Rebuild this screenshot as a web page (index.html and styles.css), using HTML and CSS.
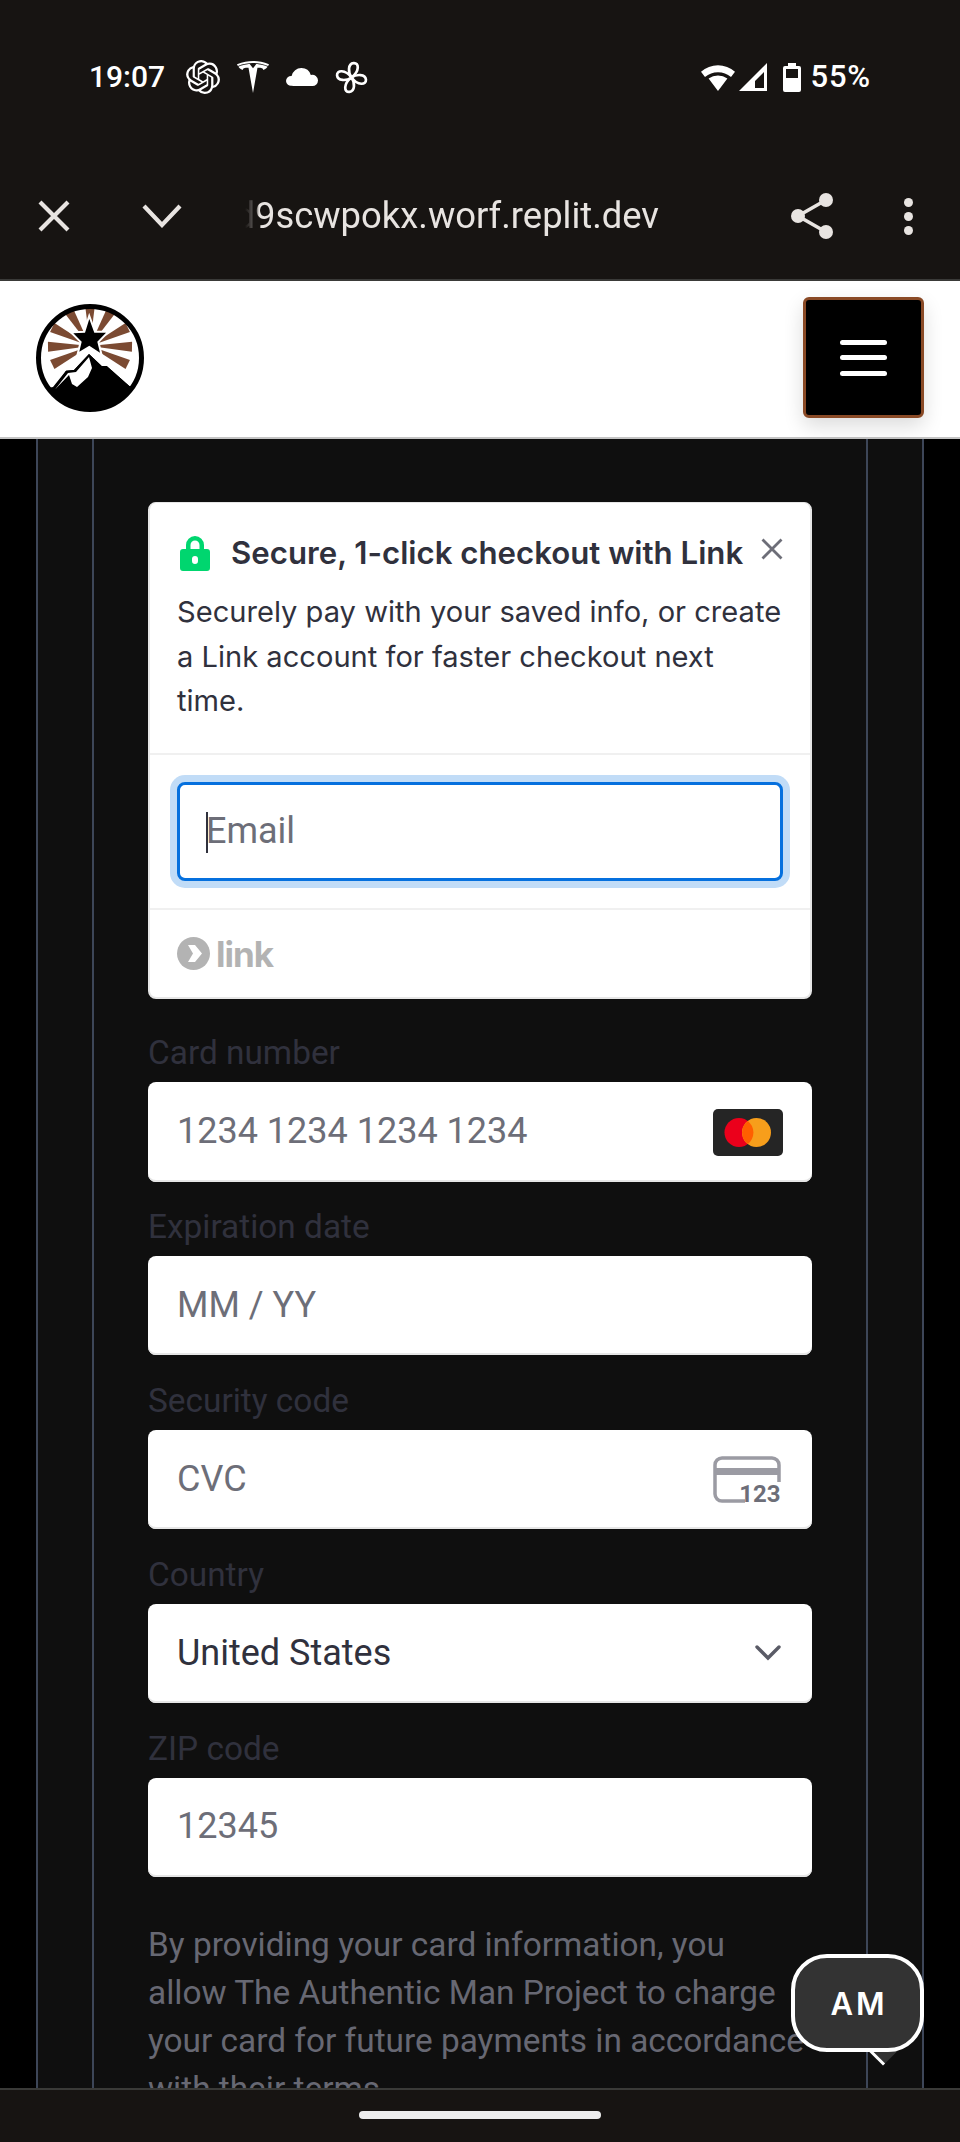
FILE: index.html
```html
<!DOCTYPE html>
<html lang="en">
<head>
<meta charset="utf-8">
<title>Checkout</title>
<link rel="stylesheet" href="styles.css">
</head>
<body>
<div class="chrome-top">
  <div class="status">
    <div class="status-left">
      <span class="time">19:07</span>
      <svg class="ic-openai" viewBox="0 0 24 24"><path fill="#fff" d="M22.2819 9.8211a5.9847 5.9847 0 0 0-.5157-4.9108 6.0462 6.0462 0 0 0-6.5098-2.9A6.0651 6.0651 0 0 0 4.9807 4.1818a5.9847 5.9847 0 0 0-3.9977 2.9 6.0462 6.0462 0 0 0 .7427 7.0966 5.98 5.98 0 0 0 .511 4.9107 6.051 6.051 0 0 0 6.5146 2.9001A5.9847 5.9847 0 0 0 13.2599 24a6.0557 6.0557 0 0 0 5.7718-4.2058 5.9894 5.9894 0 0 0 3.9977-2.9001 6.0557 6.0557 0 0 0-.7475-7.0729zm-9.022 12.6081a4.4755 4.4755 0 0 1-2.8764-1.0408l.1419-.0804 4.7783-2.7582a.7948.7948 0 0 0 .3927-.6813v-6.7369l2.02 1.1686a.071.071 0 0 1 .038.052v5.5826a4.504 4.504 0 0 1-4.4945 4.4944zm-9.6607-4.1254a4.4708 4.4708 0 0 1-.5346-3.0137l.142.0852 4.783 2.7582a.7712.7712 0 0 0 .7806 0l5.8428-3.3685v2.3324a.0804.0804 0 0 1-.0332.0615L9.74 19.9502a4.4992 4.4992 0 0 1-6.1408-1.6464zM2.3408 7.8956a4.485 4.485 0 0 1 2.3655-1.9728V11.6a.7664.7664 0 0 0 .3879.6765l5.8144 3.3543-2.0201 1.1685a.0757.0757 0 0 1-.071 0l-4.8303-2.7865A4.504 4.504 0 0 1 2.3408 7.872zm16.5963 3.8558L13.1038 8.364 15.1192 7.2a.0757.0757 0 0 1 .071 0l4.8303 2.7913a4.4944 4.4944 0 0 1-.6765 8.1042v-5.6772a.79.79 0 0 0-.407-.667zm2.0107-3.0231l-.142-.0852-4.7735-2.7818a.7759.7759 0 0 0-.7854 0L9.409 9.2297V6.8974a.0662.0662 0 0 1 .0284-.0615l4.8303-2.7866a4.4992 4.4992 0 0 1 6.6802 4.66zM8.3065 12.863l-2.02-1.1638a.0804.0804 0 0 1-.038-.0567V6.0742a4.4992 4.4992 0 0 1 7.3757-3.4537l-.142.0805L8.704 5.459a.7948.7948 0 0 0-.3927.6813zm1.0976-2.3654l2.602-1.4998 2.6069 1.4998v2.9994l-2.5974 1.4997-2.6067-1.4997Z"/></svg>
      <svg class="ic-tesla" viewBox="0 0 24 24"><path fill="#fff" d="M12 5.362l2.475-3.026s4.245.09 8.471 2.054c-1.082 1.636-3.231 2.438-3.231 2.438-.146-1.439-1.154-1.79-4.354-1.79L12 24 8.619 5.034c-3.18 0-4.188.354-4.335 1.792 0 0-2.146-.795-3.229-2.43C5.28 2.431 9.525 2.34 9.525 2.34L12 5.362l-.004.002H12v-.002zm0-3.899c3.415-.03 7.326.528 11.328 2.28.535-.968.672-1.395.672-1.395C19.625.612 15.528.015 12 0 8.472.015 4.375.61 0 2.349c0 0 .195.525.672 1.396C4.674 1.989 8.585 1.435 12 1.46v.003z"/></svg>
      <svg class="ic-cloud" viewBox="0 0 32 18"><path fill="#fff" d="M8 18a7 7 0 0 1-2-.3A5 5 0 0 1 0 13a5.2 5.2 0 0 1 5.600-5.100A10 10 0 0 1 15.500 0a9.800 9.800 0 0 1 9.300 7A5.700 5.700 0 0 1 32 12.600 5.500 5.500 0 0 1 26.500 18Z"/></svg>
      <svg class="ic-fan" viewBox="0 0 32 32"><g fill="none" stroke="#fff" stroke-width="2.600" stroke-linejoin="round"><path d="M16 16C12.500 11 12.500 2.500 18 2 23.500 1.500 24 10 16 16Z"/><path d="M16 16C12.500 11 12.500 2.500 18 2 23.500 1.500 24 10 16 16Z" transform="rotate(90 16 16)"/><path d="M16 16C12.500 11 12.500 2.500 18 2 23.500 1.500 24 10 16 16Z" transform="rotate(180 16 16)"/><path d="M16 16C12.500 11 12.500 2.500 18 2 23.500 1.500 24 10 16 16Z" transform="rotate(270 16 16)"/></g></svg>
    </div>
    <div class="status-right">
      <svg class="ic-wifi" viewBox="0 0 34 27"><path fill="#fff" d="M17 27 7.600 14.500A16 16 0 0 1 26.400 14.500ZM0 7.700A26 26 0 0 1 34 7.700L30 13A20 20 0 0 0 4 13Z"/></svg>
      <svg class="ic-signal" viewBox="0 0 28 28"><path fill="#fff" fill-rule="evenodd" d="M0 28 28 0v28ZM25 9 16 18v7h9Z"/></svg>
      <svg class="ic-battery" viewBox="0 0 18 29"><path fill="#fff" fill-rule="evenodd" d="M5 0h8v3h3a2 2 0 0 1 2 2v22a2 2 0 0 1-2 2H2a2 2 0 0 1-2-2V5a2 2 0 0 1 2-2h3ZM3 6v9h12V6Z"/></svg>
      <span class="pct">55%</span>
    </div>
  </div>
  <div class="toolbar">
    <svg class="ic-close" viewBox="0 0 32 32"><path fill="none" stroke="#e8e4e1" stroke-width="4.200" d="M2 2 30 30M30 2 2 30"/></svg>
    <svg class="ic-chevron" viewBox="0 0 40 24"><path fill="none" stroke="#e8e4e1" stroke-width="4.200" d="M2 2 20 21 38 2"/></svg>
    <div class="url"><span class="url-text">d9scwpokx.worf.replit.dev</span></div>
    <svg class="ic-share" viewBox="0 0 42 46"><g fill="#e8e4e1"><circle cx="35" cy="7" r="7"/><circle cx="7" cy="23" r="7"/><circle cx="35" cy="39" r="7"/></g><path fill="none" stroke="#e8e4e1" stroke-width="3.600" d="M35 7 7 23 35 39"/></svg>
    <div class="dots"><i></i><i></i><i></i></div>
  </div>
</div>

<header class="site-header">
  <svg class="logo" viewBox="0 0 108 108">
    <defs><clipPath id="disc"><circle cx="54" cy="54" r="52"/></clipPath></defs>
    <circle cx="54" cy="54" r="52" fill="#fff"/>
    <g clip-path="url(#disc)">
      <g fill="#7b4a32">
        <path d="M54 42 49 0H59Z"/>
        <path d="M54 42 49 0H59Z" transform="rotate(31 54 42)"/>
        <path d="M54 42 49 0H59Z" transform="rotate(64 54 42)"/>
        <path d="M54 42 49 0H59Z" transform="rotate(91 54 42)"/>
        <path d="M54 42 49 0H59Z" transform="rotate(116 54 42)"/>
        <path d="M54 42 49 0H59Z" transform="rotate(-31 54 42)"/>
        <path d="M54 42 49 0H59Z" transform="rotate(-64 54 42)"/>
        <path d="M54 42 49 0H59Z" transform="rotate(-91 54 42)"/>
        <path d="M54 42 49 0H59Z" transform="rotate(-116 54 42)"/>
      </g>
      <path fill="#000" stroke="#fff" stroke-width="7" paint-order="stroke" stroke-linejoin="miter" d="M17 83 30 66.700 38 66 53 50 65.700 62 70.700 62 93.300 82 108 82V108H0V86Z"/>
      <path fill="#000" d="M0 85H18L30 66.700 38 66 53 50 65.700 62 70.700 62 93.300 82 108 82V108H0Z"/>
      <path fill="#fff" d="M19 85.500 33 71 36 80 41 83 52 73 56 64 53 53 40 68 32 69Z"/>
    </g>
    <circle cx="54" cy="54" r="51.500" fill="none" stroke="#000" stroke-width="5"/>
    <path fill="#000" stroke="#fff" stroke-width="4" paint-order="stroke" d="M53.300 15 58.300 28.700 70 28.700 61.300 37.700 64 48.700 53.300 41.700 43.300 47.700 45.700 37.700 37.300 29.300 49 28.700Z"/>
  </svg>
  <button class="menu-btn" type="button" aria-label="Menu"><i></i><i></i><i></i></button>
</header>

<main class="stage">
  <div class="frame-outer">
    <div class="frame-inner">
      <section class="link-card">
        <div class="link-intro">
          <div class="link-heading">
            <svg class="ic-lock" viewBox="0 0 30 36"><path fill="#00d66f" fill-rule="evenodd" d="M6 14V10a9 9 0 0 1 18 0v4h3a3 3 0 0 1 3 3v16a3 3 0 0 1-3 3H3a3 3 0 0 1-3-3V17a3 3 0 0 1 3-3ZM10.500 14h9v-4a4.500 4.500 0 0 0-9 0ZM15 21a3 3 0 0 0-3 3v2a3 3 0 0 0 6 0v-2a3 3 0 0 0-3-3Z"/></svg>
            <h2 class="link-title">Secure, 1-click checkout with Link</h2>
            <svg class="ic-x" viewBox="0 0 22 22"><path fill="none" stroke="#6d6e78" stroke-width="2.800" d="M1.500 1.500 20.500 20.500M20.500 1.500 1.500 20.500"/></svg>
          </div>
          <p class="link-desc">Securely pay with your saved info, or create a Link account for faster checkout next time.</p>
        </div>
        <div class="link-email">
          <div class="input input-focus"><span class="caret"></span><span class="ph">Email</span></div>
        </div>
        <div class="link-brand">
          <svg class="ic-link" viewBox="0 0 33 33"><circle cx="16.500" cy="16.500" r="16.500" fill="#b3b3b3"/><path fill="#fff" d="M11 8h7l7 8.500-7 8.500h-7l5-8.500Z"/></svg>
          <span class="link-word">link</span>
        </div>
      </section>

      <div class="fields">
        <div class="field">
          <label class="label">Card number</label>
          <div class="input"><span class="ph">1234 1234 1234 1234</span>
            <svg class="ic-mc" viewBox="0 0 70 47"><rect width="70" height="47" rx="5" fill="#252525"/><circle cx="26" cy="23.500" r="14.500" fill="#eb001b"/><circle cx="43.500" cy="23.500" r="14.500" fill="#f79e1b"/><path fill="#ff5f00" d="M34.750 12a14.500 14.500 0 0 1 0 23 14.500 14.500 0 0 1 0-23Z"/></svg>
          </div>
        </div>
        <div class="field">
          <label class="label">Expiration date</label>
          <div class="input"><span class="ph">MM / YY</span></div>
        </div>
        <div class="field">
          <label class="label">Security code</label>
          <div class="input"><span class="ph">CVC</span>
            <svg class="ic-cvc" viewBox="0 0 68 47"><g fill="none" stroke="#9b9ba3" stroke-width="3.500"><path d="M66 26V9a7 7 0 0 0-7-7H9a7 7 0 0 0-7 7v29a7 7 0 0 0 7 7h23"/></g><path fill="#9b9ba3" d="M2 12h64v7H2z"/><text class="cvc-num" x="67.500" y="46" text-anchor="end">123</text></svg>
          </div>
        </div>
        <div class="field">
          <label class="label">Country</label>
          <div class="input"><span class="val">United States</span>
            <svg class="ic-select" viewBox="0 0 26 16"><path fill="none" stroke="#5a5b66" stroke-width="3.400" stroke-linecap="round" d="M2 2 13 13 24 2"/></svg>
          </div>
        </div>
        <div class="field">
          <label class="label">ZIP code</label>
          <div class="input"><span class="ph">12345</span></div>
        </div>
      </div>

      <p class="terms">By providing your card information, you<br>allow The Authentic Man Project to charge<br>your card for future payments in accordance<br>with their terms.</p>
    </div>
  </div>
</main>

<div class="chrome-bottom"><span class="home-pill"></span></div>

<div class="bubble"><span class="bubble-tail"></span><span class="bubble-body">AM</span></div>
</body>
</html>
```

FILE: styles.css
```css
* { box-sizing: border-box; }
html, body { margin: 0; padding: 0; }
body {
  width: 960px;
  height: 2142px;
  overflow: hidden;
  position: relative;
  display: flex;
  flex-direction: column;
  background: #000;
  font-family: "Roboto", "Liberation Sans", sans-serif;
}

/* Android chrome */
.chrome-top {
  height: 281px;
  background: #171412;
  border-bottom: 2px solid #3a3a38;
  flex: none;
  display: flex;
  flex-direction: column;
}
.status {
  height: 62px;
  margin-top: 46px;
  padding: 0 89px;
  display: flex;
  align-items: center;
  justify-content: space-between;
  color: #fff;
}
.status-left, .status-right { display: flex; align-items: center; }
.time, .pct { line-height: 34px; font-weight: 500; color: #fff; }
.time { width: 97px; font-size: 30px; }
.pct { margin-left: 10px; font-size: 31px; letter-spacing: .8px; }
.ic-openai { width: 34px; height: 34px; }
.ic-tesla { width: 32px; height: 32px; margin-left: 17px; }
.ic-cloud { width: 32px; height: 18px; margin-left: 17px; }
.ic-fan { width: 33px; height: 33px; margin-left: 17px; }
.ic-wifi { width: 34px; height: 27px; }
.ic-signal { width: 28px; height: 28px; margin-left: 4px; }
.ic-battery { width: 18px; height: 29px; margin-left: 16px; }

.toolbar {
  height: 76px;
  margin-top: 70px;
  display: flex;
  align-items: center;
  color: #e8e4e1;
}
.ic-close { width: 32px; height: 32px; margin-left: 38px; flex: none; }
.ic-chevron { width: 40px; height: 24px; margin-left: 72px; flex: none; }
.url {
  width: 414px;
  margin-left: 63px;
  font-size: 36.400px;
  line-height: 46px;
  color: #e8e4e1;
  white-space: nowrap;
  overflow: hidden;
  display: flex;
  justify-content: flex-end;
  -webkit-mask-image: linear-gradient(90deg, transparent 0, rgba(0,0,0,.45) 12px, #000 14px);
  mask-image: linear-gradient(90deg, transparent 0, rgba(0,0,0,.45) 12px, #000 14px);
  flex: none;
}
.url-text { flex: none; }
.ic-share { width: 42px; height: 46px; margin-left: 132px; flex: none; }
.dots { margin-left: 71px; display: flex; flex-direction: column; gap: 5px; flex: none; }
.dots i { display: block; width: 9px; height: 9px; border-radius: 50%; background: #e8e4e1; }

/* Site header */
.site-header {
  height: 158px;
  flex: none;
  background: #fff;
  border-bottom: 2px solid #c4c4c4;
  padding: 16px 36px 0 36px;
  display: flex;
  align-items: flex-start;
  justify-content: space-between;
}
.logo { width: 108px; height: 108px; margin-top: 7px; display: block; }
.menu-btn {
  width: 121px;
  height: 121px;
  background: #000;
  border: 3px solid #8a4a26;
  border-radius: 6px;
  padding: 0;
  display: flex;
  flex-direction: column;
  align-items: center;
  justify-content: center;
  gap: 10.500px;
  box-shadow: 0 8px 20px rgba(0,0,0,.14);
}
.menu-btn i { display: block; width: 47px; height: 5px; border-radius: 3px; background: #fff; }

/* Frames */
.stage {
  flex: 1;
  min-height: 0;
  overflow: hidden;
  padding: 0 36px;
  background: #000;
}
.frame-outer {
  height: 100%;
  padding: 0 54px;
  background: #0f0f0f;
  border-left: 2px solid #3d4658;
  border-right: 2px solid #3d4658;
}
.frame-inner {
  height: 100%;
  padding: 63px 54px 0;
  border-left: 2px solid #3d4658;
  border-right: 2px solid #3d4658;
}

/* Link card */
.link-card {
  background: #fff;
  border-radius: 8px;
  border: 1px solid #e6e6e6;
  border-left-width: 2px;
  border-right-width: 2px;
  border-bottom-width: 2px;
  height: 497px;
  display: flex;
  flex-direction: column;
}
.link-intro { padding: 28px 27px 0; border-bottom: 2px solid #f0f0f0; height: 252px; }
.link-heading { display: flex; align-items: center; height: 44px; position: relative; }
.ic-lock { width: 30px; height: 36px; margin-left: 3px; flex: none; }
.link-title {
  margin: 0 0 0 21px;
  font-family: "Inter", sans-serif;
  font-size: 31.200px;
  line-height: 44px;
  font-weight: 600;
  color: #30313d;
  white-space: nowrap;
}
.ic-x { position: absolute; right: 0; top: 7px; width: 22px; height: 22px; }
.link-desc {
  margin: 15px -6px 0 0;
  font-family: "Inter", sans-serif;
  font-size: 29.100px;
  line-height: 44.500px;
  color: #30313d;
}
.link-email { padding: 27px 27px 0; border-bottom: 2px solid #f0f0f0; height: 155px; }
.link-brand { flex: 1; padding: 0 27px; display: flex; align-items: center; }
.ic-link { width: 33px; height: 33px; flex: none; }
.link-word { margin-left: 6px; font-family: "Inter", sans-serif; font-weight: 700; font-size: 35px; line-height: 40px; color: #b3b3b3; letter-spacing: -1px; }

/* Inputs */
.fields { margin-top: 36px; display: flex; flex-direction: column; gap: 27.400px; }
.label { display: block; height: 36px; margin-bottom: 11px; font-size: 33.400px; line-height: 36px; color: #30313d; }
.input {
  height: 99.500px;
  background: #fff;
  border-radius: 8px;
  padding: 0 29px;
  display: flex;
  align-items: center;
  justify-content: space-between;
  font-size: 36px;
  box-shadow: inset 0 -2px 0 #e6e6e6;
}
.input-focus {
  position: relative;
  border: 3px solid #0570de;
  box-shadow: 0 0 0 7px #c1dcf7;
  justify-content: flex-start;
  padding-left: 26px;
  height: 99px;
}
.caret { position: absolute; left: 26px; top: 27px; width: 2px; height: 41px; background: #30313d; }
.ph { color: #6d6e78; margin-top: -2px; }
.val { color: #30313d; }
.ic-mc { width: 70px; height: 47px; margin-top: 1px; }
.ic-cvc { width: 68px; height: 47px; margin-right: 2px; overflow: visible; }
.cvc-num { font-family: "Roboto", sans-serif; font-weight: 700; font-size: 24px; fill: #6d6e78; }
.ic-select { width: 26px; height: 16px; margin-right: 2px; }

.terms {
  margin: 44px 0 0;
  font-size: 33.400px;
  line-height: 48px;
  color: #676873;
  white-space: nowrap;
}

/* Bottom bar */
.chrome-bottom {
  height: 54px;
  flex: none;
  background: #171412;
  border-top: 2px solid #3a3a38;
  display: flex;
  justify-content: center;
  padding-top: 21px;
}
.home-pill { display: block; width: 242px; height: 8px; border-radius: 4px; background: #ededed; }

/* Chat bubble overlay */
.bubble { position: absolute; left: 791px; top: 1954px; width: 133px; height: 98px; }
.bubble-body {
  position: absolute;
  inset: 0;
  display: flex;
  align-items: center;
  justify-content: center;
  background: #333;
  border: 4px solid #fff;
  border-radius: 36px;
  color: #fff;
  font-family: "Inter", sans-serif;
  font-weight: 600;
  font-size: 31px;
  letter-spacing: 3px;
  padding-left: 3px;
}
.bubble-tail {
  position: absolute;
  left: 81px;
  top: 85px;
  width: 22px;
  height: 22px;
  background: #333;
  border-bottom: 3px solid #fff;
  transform: rotate(45deg);
}
```
